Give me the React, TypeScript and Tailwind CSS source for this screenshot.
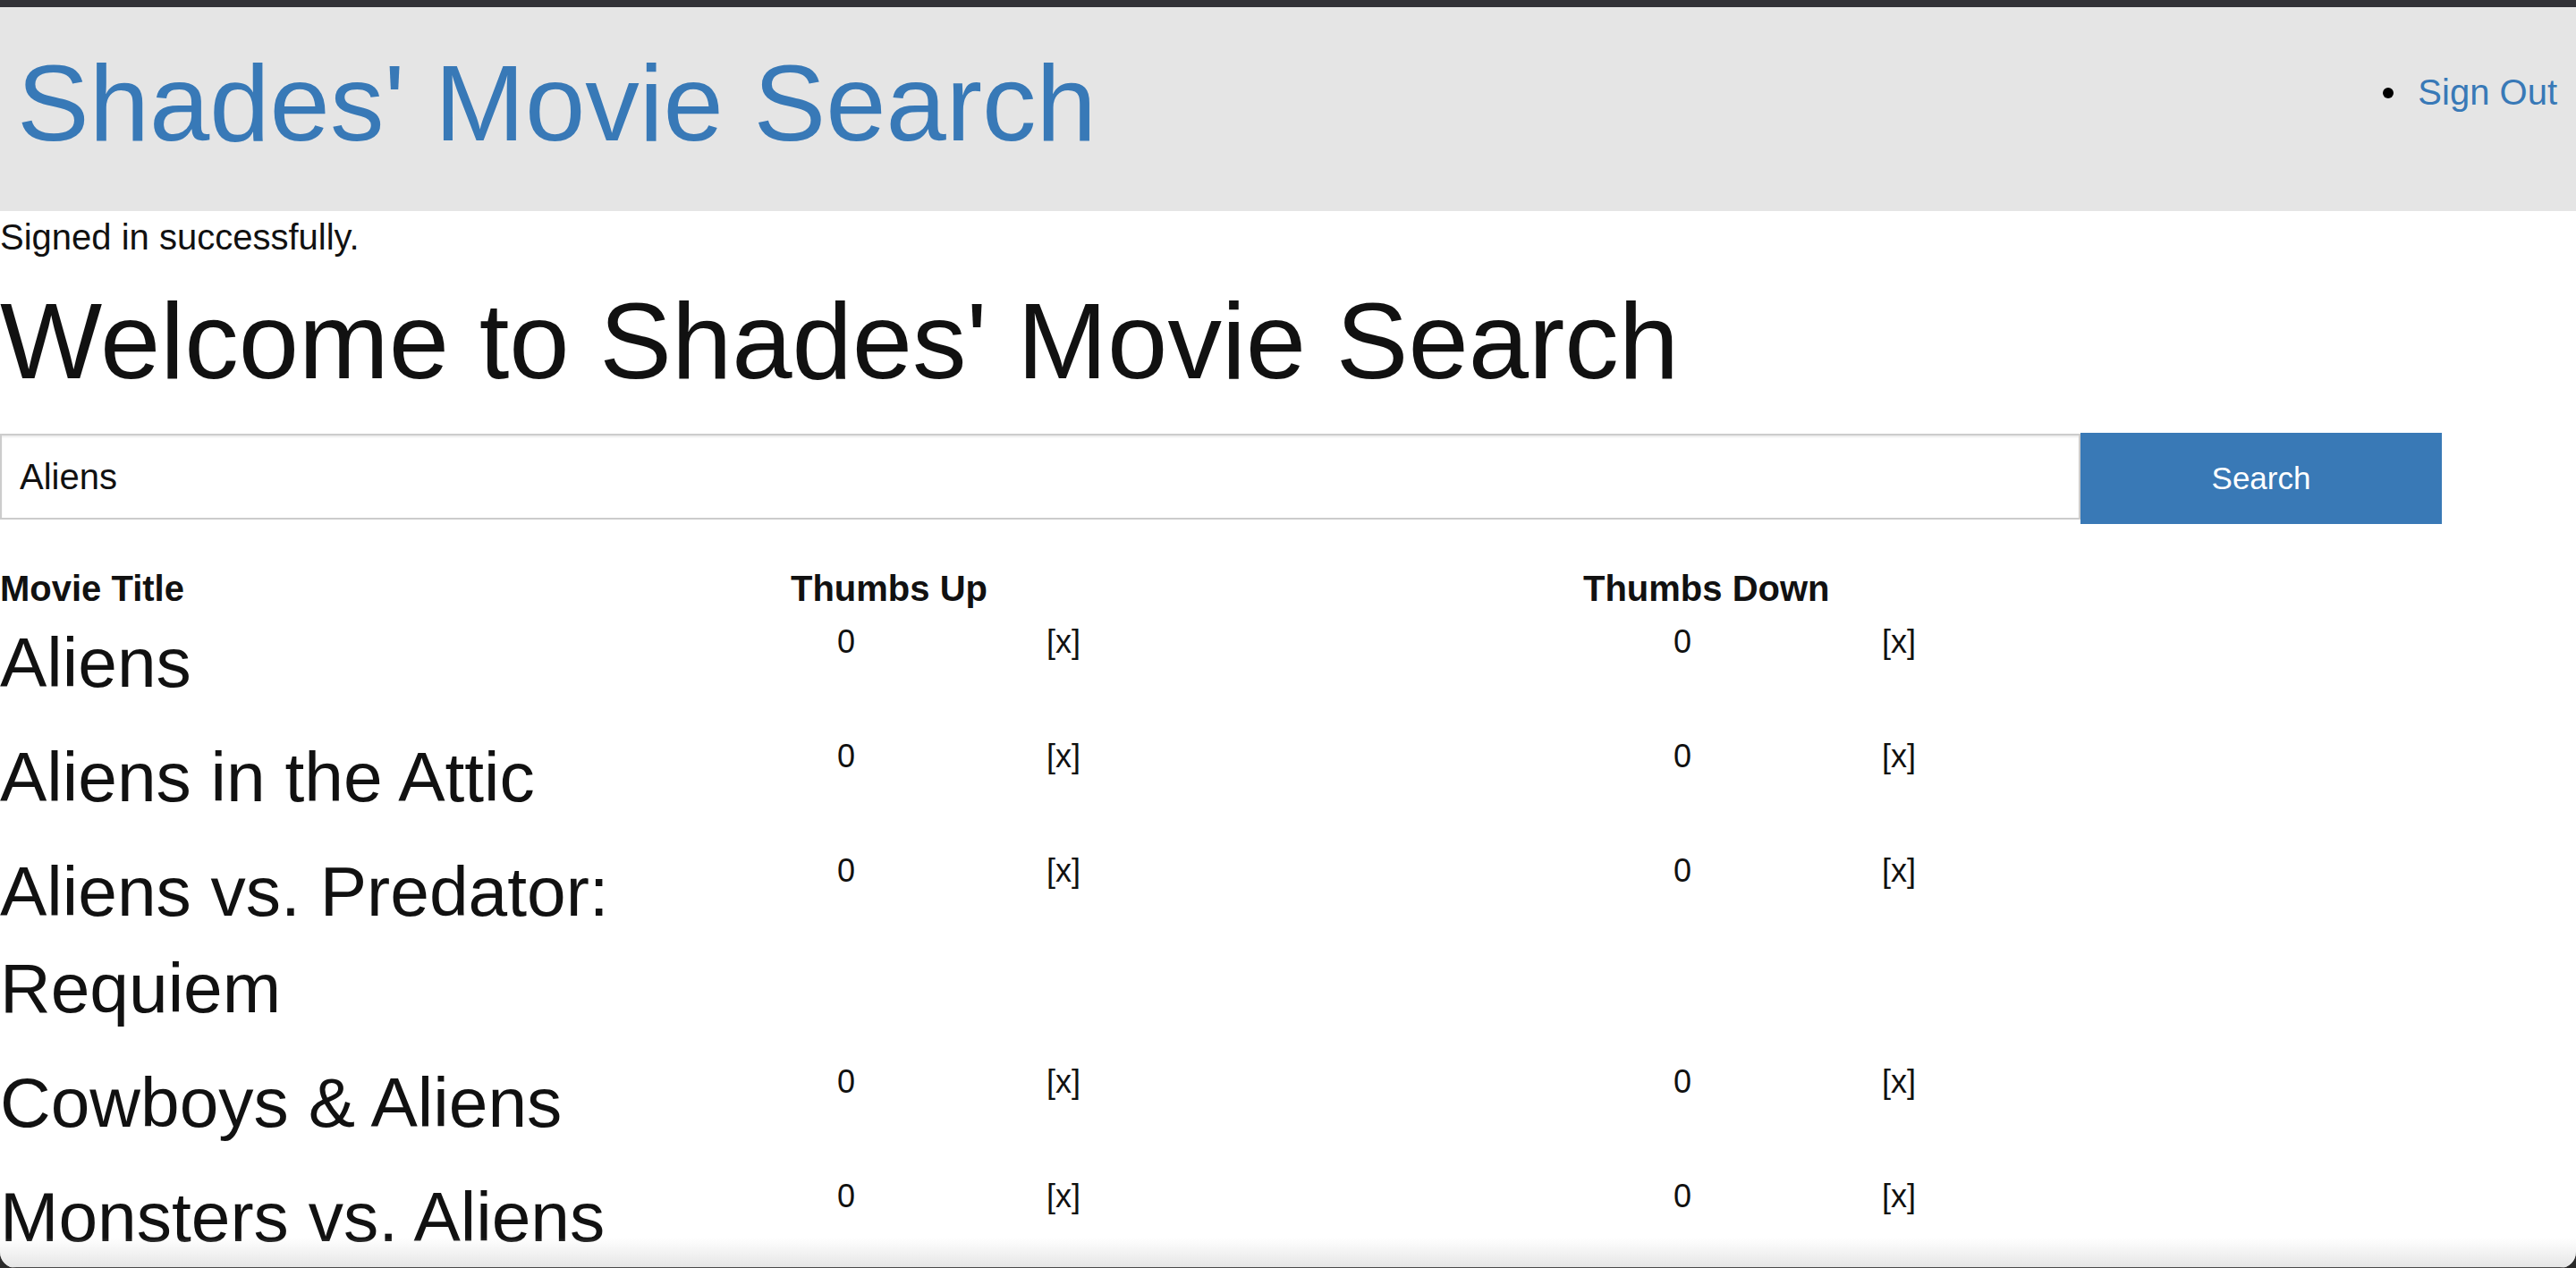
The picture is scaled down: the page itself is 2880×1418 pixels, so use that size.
const movies = [
  'Aliens',
  'Aliens in the Attic',
  'Aliens vs. Predator: Requiem',
  'Cowboys & Aliens',
  'Monsters vs. Aliens',
];

function VoteCell({ count, pad, gap }: { count: number; pad: string; gap: string }) {
  return (
    <div className={`flex mt-[2px] text-[36px] leading-[57px] ${pad}`}>
      <span className={gap}>{count}</span>
      <a href="#" className="text-[#111]">[x]</a>
    </div>
  );
}

export default function App() {
  return (
    <div className="h-screen overflow-hidden bg-[#2b2b2b] font-['Liberation_Sans',Arial,sans-serif]">
      <div className="relative h-full overflow-hidden rounded-b-[18px] bg-white text-[#111]">
        <div className="h-[8px] bg-[#323237]" />

        {/* NAVBAR */}
        <header className="flex items-start justify-between bg-[#e5e5e5] pl-[19px] pr-[21px] pt-[41px] pb-[55px]">
          <a href="#" className="text-[121px] leading-[132px] text-[#3879b7]">
            Shades' Movie Search
          </a>
          <ul className="mt-[26px] flex items-center gap-[27px] text-[40px] leading-[57px]">
            <span className="h-[12px] w-[12px] rounded-full bg-black" />
            <li>
              <a href="#" className="text-[#3879b7]">Sign Out</a>
            </li>
          </ul>
        </header>

        <p className="text-[40px] leading-[57px] pt-[1px]">Signed in successfully.</p>

        <h1 className="mt-[21px] text-[121px] leading-[132px]">Welcome to Shades' Movie Search</h1>

        {/* SEARCH */}
        <form className="mt-[37px] flex w-[2730px] items-start">
          <input
            readOnly
            value="Aliens"
            className="mt-[1px] h-[96px] flex-1 border-2 border-[#cccccc] bg-white px-[20px] text-[40px] text-[#111] shadow-[inset_0_2px_2px_rgba(0,0,0,0.075)] outline-none"
          />
          <button type="button" className="h-[102px] w-[404px] bg-[#3979b6] text-[35px] text-white">
            Search
          </button>
        </form>

        {/* RESULTS */}
        <div className="mt-[44px] grid grid-cols-[884px_886px_1fr] text-[40px] font-bold leading-[57px]">
          <div>Movie Title</div>
          <div>Thumbs Up</div>
          <div>Thumbs Down</div>
        </div>
        {movies.map((title) => (
          <div key={title} className="grid grid-cols-[884px_886px_1fr] items-start pb-[20px]">
            <h3 className="text-[78.5px] leading-[108px]">{title}</h3>
            <VoteCell count={0} pad="pl-[52px]" gap="w-[234px]" />
            <VoteCell count={0} pad="pl-[101px]" gap="w-[233px]" />
          </div>
        ))}

        {/* window edge */}
        <div className="pointer-events-none absolute inset-x-0 bottom-0 h-[34px] border-b border-[#4a4a4a] bg-linear-to-b from-white/0 to-[#e6e6e6]" />
      </div>
    </div>
  );
}
